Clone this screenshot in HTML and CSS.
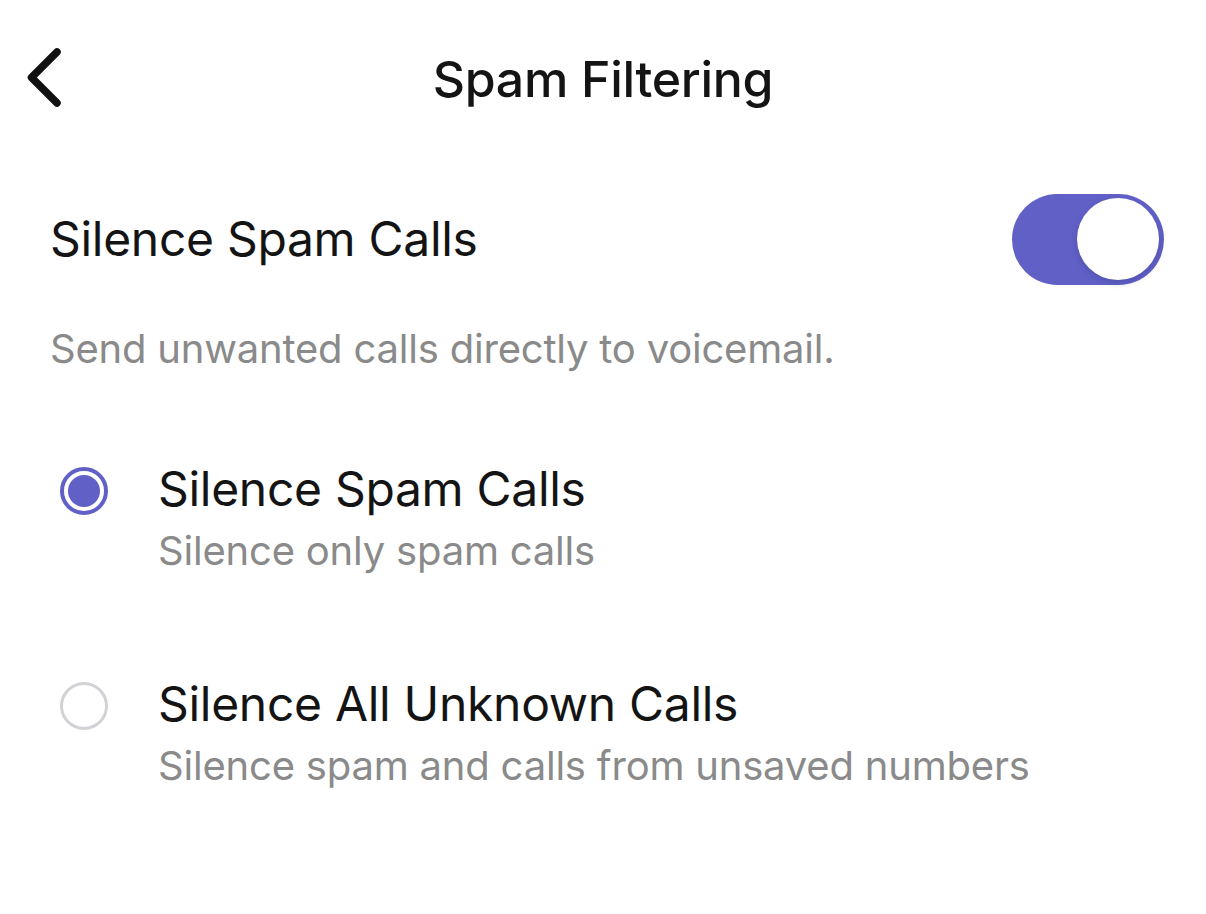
FILE: index.html
```html
<!DOCTYPE html>
<html>
<head>
<meta charset="utf-8">
<link rel="stylesheet" href="styles.css">
</head>
<body>
<div class="screen">
  <header class="topbar">
    <button class="back" aria-label="Back">
      <svg width="40" height="62" viewBox="0 0 40 62"><path d="M32 5 L6.5 30.5 L32 56" fill="none" stroke="#111111" stroke-width="7.5" stroke-linecap="round" stroke-linejoin="round"/></svg>
    </button>
    <h1 class="title">Spam Filtering</h1>
    <div class="spacer"></div>
  </header>

  <section class="setting">
    <div class="setting-row">
      <span class="setting-label">Silence Spam Calls</span>
      <div class="switch on"><div class="knob"></div></div>
    </div>
    <p class="setting-desc">Send unwanted calls directly to voicemail.</p>
  </section>

  <ul class="options">
    <li class="option">
      <span class="radio checked"><span class="dot"></span></span>
      <div class="option-text">
        <div class="option-title">Silence Spam Calls</div>
        <div class="option-sub">Silence only spam calls</div>
      </div>
    </li>
    <li class="option">
      <span class="radio"></span>
      <div class="option-text">
        <div class="option-title">Silence All Unknown Calls</div>
        <div class="option-sub">Silence spam and calls from unsaved numbers</div>
      </div>
    </li>
  </ul>
</div>
</body>
</html>
```

FILE: styles.css
```css
* { box-sizing: border-box; }
html, body { margin: 0; padding: 0; background: #ffffff; }
body {
  font-family: Inter, "Noto Sans", "Liberation Sans", sans-serif;
  color: #141414;
  width: 1206px;
  height: 914px;
  overflow: hidden;
}
.screen { display: flex; flex-direction: column; }

.topbar {
  display: grid;
  grid-template-columns: 120px 1fr 120px;
  align-items: start;
  height: 156px;
}
.back {
  background: none;
  border: 0;
  padding: 0 0 0 25px;
  margin: 47px 0 0;
  height: 62px;
  display: flex;
  align-items: center;
  justify-self: start;
}
.back svg { display: block; }
.title {
  margin: 49px 0 0;
  text-align: center;
  font-size: 50px;
  font-weight: 500;
  letter-spacing: -0.3px;
  line-height: 60px;
}

.setting { padding: 0 42px 0 50px; }
.setting-row {
  display: flex;
  align-items: center;
  justify-content: space-between;
  height: 92px;
  margin-top: 37px;
}
.setting-label { font-size: 48px; line-height: 56px; font-weight: 400; letter-spacing: -0.3px; }
.switch {
  width: 152px;
  height: 91px;
  border-radius: 46px;
  background: #6160c6;
  position: relative;
}
.switch .knob {
  position: absolute;
  top: 4px;
  right: 5px;
  width: 82px;
  height: 82px;
  border-radius: 50%;
  background: #ffffff;
  box-shadow: 0 3px 6px rgba(40, 40, 120, 0.25);
}
.setting-desc {
  margin: 40px 0 0;
  font-size: 40px;
  line-height: 48px;
  color: #8a8a8a;
  letter-spacing: -0.2px;
}

.options { list-style: none; margin: 86px 0 0; padding: 0 0 0 60px; }
.option {
  display: flex;
  align-items: flex-start;
  gap: 50px;
  height: 215px;
}
.radio {
  flex: none;
  width: 48px;
  height: 48px;
  border-radius: 50%;
  border: 3px solid #d2d2d6;
  margin-top: 8px;
  display: flex;
  align-items: center;
  justify-content: center;
}
.radio.checked { border: 4px solid #6160c6; }
.radio .dot {
  width: 32px;
  height: 32px;
  border-radius: 50%;
  background: #6160c6;
}
.option-title { font-size: 48px; line-height: 60px; letter-spacing: -0.3px; }
.option-sub { font-size: 40px; line-height: 56px; margin-top: 4px; color: #8a8a8a; letter-spacing: -0.2px; }
```
